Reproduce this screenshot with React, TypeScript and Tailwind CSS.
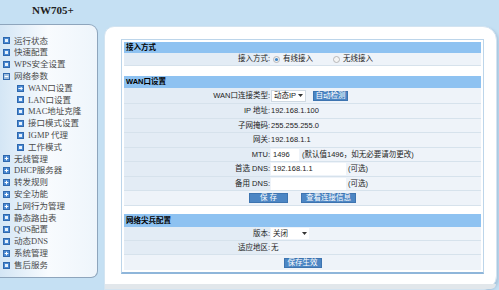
import React from 'react';

type IconKind = 'dot' | 'plus' | 'minus' | 'arrow';

const menu: [string, IconKind, number][] = [
  ['运行状态', 'dot', 0],
  ['快速配置', 'dot', 0],
  ['WPS安全设置', 'dot', 0],
  ['网络参数', 'minus', 0],
  ['WAN口设置', 'arrow', 1],
  ['LAN口设置', 'dot', 1],
  ['MAC地址克隆', 'dot', 1],
  ['接口模式设置', 'dot', 1],
  ['IGMP 代理', 'dot', 1],
  ['工作模式', 'dot', 1],
  ['无线管理', 'plus', 0],
  ['DHCP服务器', 'plus', 0],
  ['转发规则', 'plus', 0],
  ['安全功能', 'plus', 0],
  ['上网行为管理', 'plus', 0],
  ['静态路由表', 'dot', 0],
  ['QOS配置', 'dot', 0],
  ['动态DNS', 'dot', 0],
  ['系统管理', 'plus', 0],
  ['售后服务', 'dot', 0],
];

const MenuIcon = ({ kind }: { kind: IconKind }) => (
  <svg width="7" height="7" viewBox="0 0 7 7" className="shrink-0">
    <rect x="0.5" y="0.5" width="6" height="6" fill={kind === 'minus' ? '#9fbfe0' : '#4a8ad4'} stroke="#2f68ad" strokeWidth="1" />
    {kind === 'dot' && <rect x="2" y="2" width="3" height="3" fill="#e6f1fc" />}
    {kind === 'plus' && <path d="M3.5 1.7v3.6M1.7 3.5h3.6" stroke="#fff" strokeWidth="1" />}
    {kind === 'minus' && <path d="M1.7 3.5h3.6" stroke="#fff" strokeWidth="1" />}
    {kind === 'arrow' && <path d="M1.4 3.5h3.8M3.6 1.9l1.6 1.6-1.6 1.6" stroke="#fff" strokeWidth="1" fill="none" />}
  </svg>
);

const Radio = ({ on }: { on?: boolean }) => (
  <svg width="7" height="7" viewBox="0 0 7 7" className="shrink-0">
    <circle cx="3.5" cy="3.5" r="3" fill="#f4f4f4" stroke="#a8a8a8" strokeWidth="0.8" />
    {on && <circle cx="3.5" cy="3.5" r="1.6" fill="#3f86c8" />}
  </svg>
);

const Caret = () => (
  <svg width="5" height="3" viewBox="0 0 5 3" className="shrink-0">
    <path d="M0 0h5L2.5 3z" fill="#333" />
  </svg>
);

const Row = ({ label, h = 'h-[14px]', children }: { label: string; h?: string; children?: React.ReactNode }) => (
  <div className={`flex ${h} border-b border-[#d6e2ec]`}>
    <div className="w-[146px] bg-[#e3ecf5] flex items-center justify-end">{label}</div>
    <div className="flex-1 bg-[#eef3f9] flex items-center gap-[2px] pl-px">{children}</div>
  </div>
);

const Header = ({ title, h = 'h-[12px]' }: { title: string; h?: string }) => (
  <div className={`${h} bg-[#8ec2f1] flex items-center pl-[2px] font-bold text-black`}>{title}</div>
);

const Btn = ({ children, w }: { children: React.ReactNode; w: string }) => (
  <div className={`${w} h-[10px] bg-[#4c86c4] border border-[#3d74b0] text-white flex items-center justify-center`}>
    {children}
  </div>
);

export default function App() {
  return (
    <div className="w-[499px] h-[290px] bg-[#c5e0f3] overflow-hidden flex flex-col font-['Liberation_Sans','Noto_Sans_CJK_SC',sans-serif]">
      <div className="h-[24px] shrink-0 pl-[32px] pt-[5px] text-[11px] font-bold text-[#222] font-['Liberation_Serif',serif] leading-none">
        NW705+
      </div>
      <div className="flex flex-1">
        {/* left menu */}
        <div className="w-[98px] h-[254px] border border-l-0 border-[#8ea5bc] rounded-tr-[9px] rounded-br-[7px] bg-gradient-to-r from-[#d4e6f5] via-[#f8fbfe] to-[#eef5fb] pt-[10px] font-['Liberation_Serif','Noto_Sans_CJK_SC',serif] text-[8.5px] text-[#4a4a4a]">
          {menu.map(([name, kind, level]) => (
            <div key={name} className={`h-[11.8px] flex items-center gap-[4px] ${level ? 'pl-[17px]' : 'pl-[3px]'}`}>
              <MenuIcon kind={kind} />
              <span className="leading-none whitespace-nowrap">{name}</span>
            </div>
          ))}
        </div>

        {/* main panel */}
        <div className="ml-[6px] mr-[2px] mt-[2px] flex-1 h-[264px] bg-white border border-[#d3e4f1] rounded-tl-[10px] rounded-tr-[14px] rounded-br-[14px] shadow-[2px_2px_3px_#a9c6de] flex flex-col">
          <div className="pl-[16px] pt-[12px]">
            <div className="w-[363px] border border-[#bcd5ea] border-b-[2px] border-b-[#8fb6da] p-[2px] flex flex-col text-[7.5px] text-[#222] leading-none">
              <Header title="接入方式" h="h-[11px]" />
              <Row label="接入方式:" h="h-[13px]">
                <div className="flex items-center gap-[3px] pl-[2px]">
                  <Radio on />
                  <span>有线接入</span>
                  <span className="w-[14px]" />
                  <Radio />
                  <span>无线接入</span>
                </div>
              </Row>
              <div className="h-[10px] bg-white" />

              <Header title="WAN口设置" />
              <Row label="WAN口连接类型:" h="h-[16px]">
                <div className="w-[35px] h-[12px] bg-white border border-[#cfd9e2] flex items-center justify-between px-[2px]">
                  <span>动态IP</span>
                  <Caret />
                </div>
                <span className="w-[3px]" />
                <Btn w="w-[35px]">自动检测</Btn>
              </Row>
              <Row label="IP 地址:" h="h-[15px]">192.168.1.100</Row>
              <Row label="子网掩码:">255.255.255.0</Row>
              <Row label="网关:" h="h-[15px]">192.168.1.1</Row>
              <Row label="MTU:">
                <div className="w-[28px] h-[12px] bg-white flex items-center pl-[2px]">1496</div>
                <span className="pl-[1px]">(默认值1496，如无必要请勿更改)</span>
              </Row>
              <Row label="首选 DNS:" h="h-[15px]">
                <div className="w-[75px] h-[12px] bg-white flex items-center pl-[2px]">192.168.1.1</div>
                <span>(可选)</span>
              </Row>
              <Row label="备用 DNS:">
                <div className="w-[75px] h-[12px] bg-white" />
                <span>(可选)</span>
              </Row>
              <div className="h-[15px] bg-[#eef3f9] border-b border-[#d6e2ec] flex items-center justify-center gap-[13px]">
                <Btn w="w-[39px]">保 存</Btn>
                <Btn w="w-[55px]">查看连接信息</Btn>
              </div>
              <div className="h-[8px] bg-white" />

              <Header title="网络尖兵配置" h="h-[13px]" />
              <Row label="版本:">
                <div className="w-[38px] h-[11px] bg-white flex items-center justify-between px-[2px]">
                  <span>关闭</span>
                  <Caret />
                </div>
              </Row>
              <Row label="适应地区:">无</Row>
              <div className="h-[15px] bg-[#eef3f9] flex items-center justify-center">
                <Btn w="w-[38px]">保存生效</Btn>
              </div>
            </div>
          </div>
          <div className="flex-1" />
          <div className="h-[5px] bg-[#e2e7eb] rounded-br-[14px]" />
        </div>
      </div>
    </div>
  );
}
